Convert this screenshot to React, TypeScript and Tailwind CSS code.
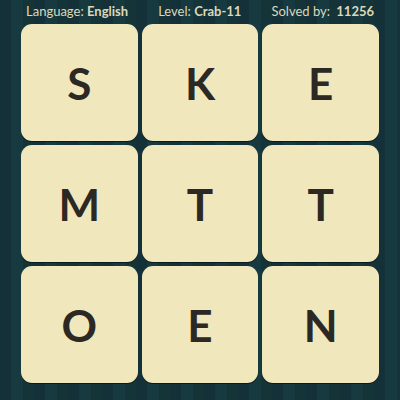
const letters = ['S', 'K', 'E', 'M', 'T', 'T', 'O', 'E', 'N'];

export default function App() {
  return (
    <div className="w-[400px] h-[400px] overflow-hidden bg-[repeating-linear-gradient(90deg,#14313a_0px,#14313a_11px,#173a40_11px,#173a40_23px,#153438_23px,#153438_34px)] font-['Lato','Noto_Sans',sans-serif]">
      <div className="h-[24px] flex items-center justify-between px-[26px] text-[13px] text-[#ddd8b8]">
        <span>
          Language: <b className="font-bold">English</b>
        </span>
        <span>
          Level: <b className="font-bold">Crab-11</b>
        </span>
        <span>
          Solved by: <b className="font-bold ml-[3px]">11256</b>
        </span>
      </div>
      <div className="mx-auto w-[358px] grid grid-cols-3 gap-[4px]">
        {letters.map((l, i) => (
          <div
            key={i}
            className="h-[117px] rounded-[11px] bg-[#f0e7bd] shadow-[0_1px_0_#0b1a1c] flex items-center justify-center text-[#2c2924] text-[44px] font-bold"
          >
            {l}
          </div>
        ))}
      </div>
    </div>
  );
}
